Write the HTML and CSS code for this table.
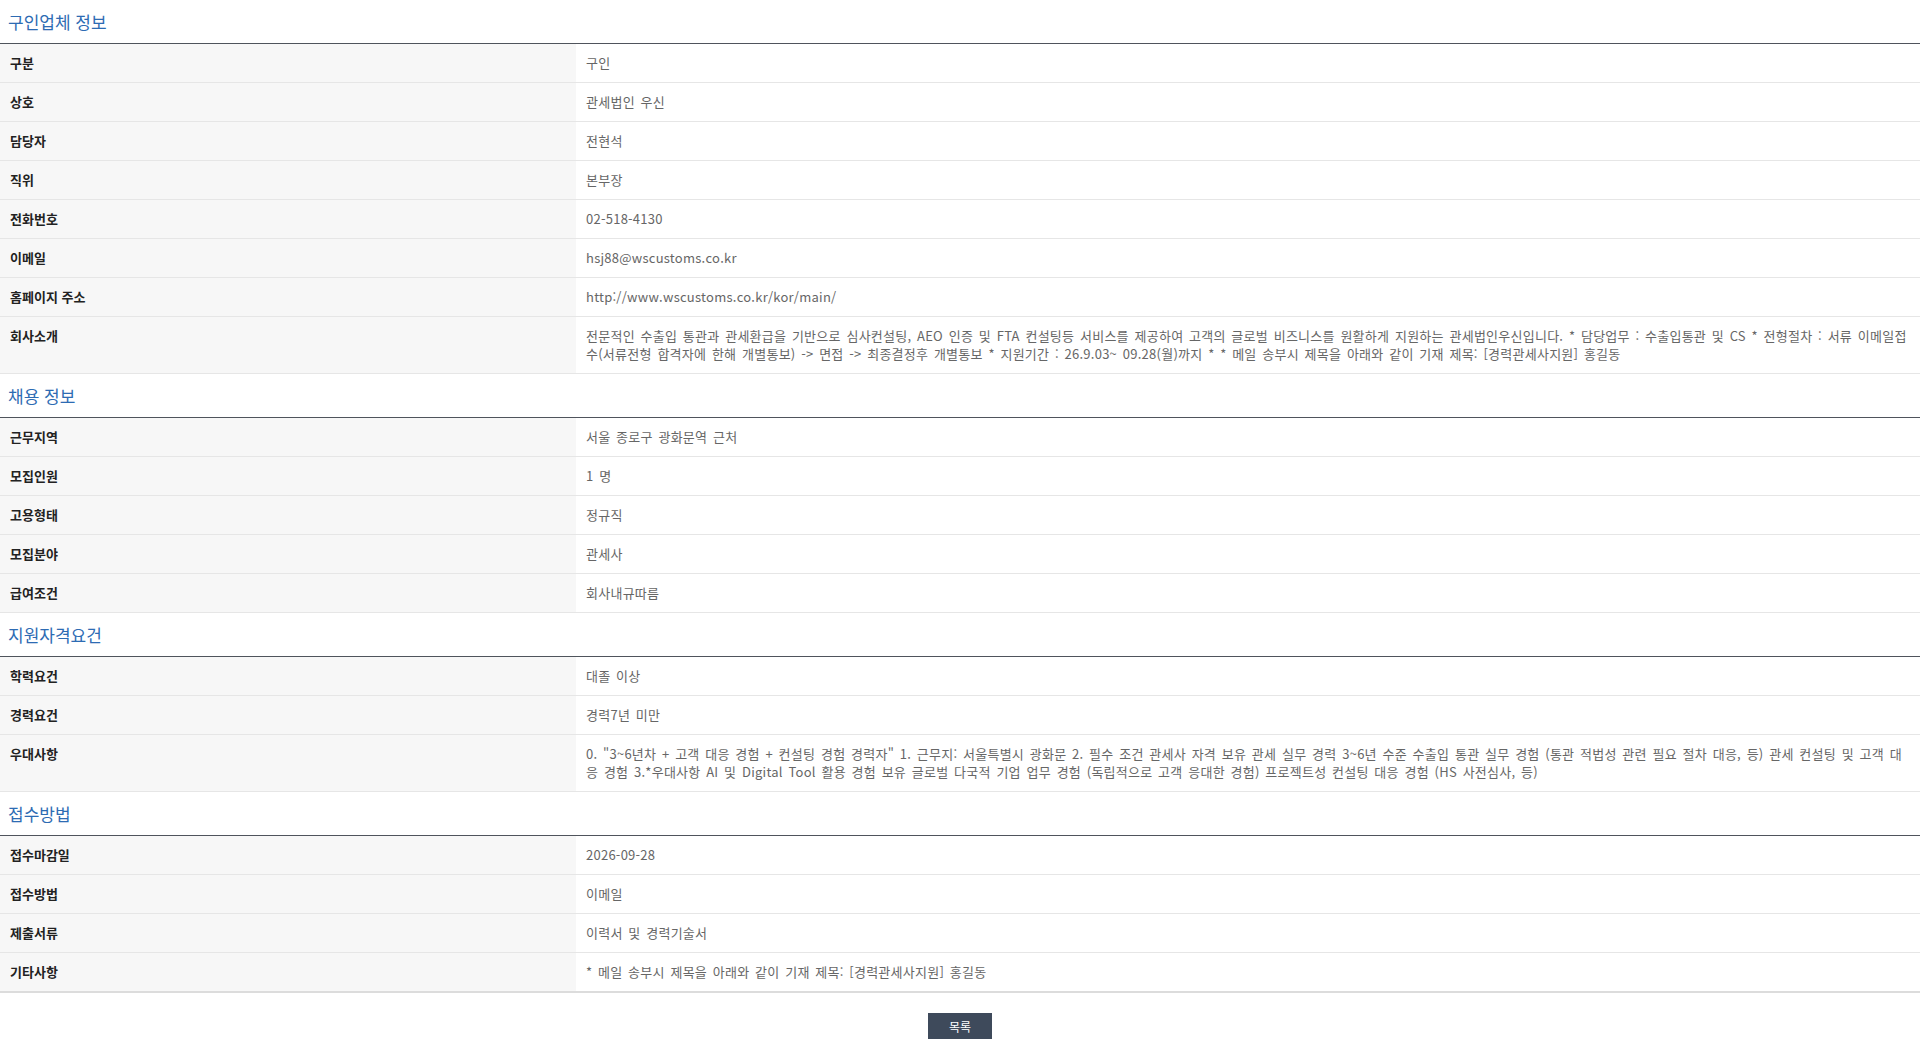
FILE: index.html
```html
<!DOCTYPE html>
<html lang="ko">
<head>
<meta charset="utf-8">
<title>채용 정보</title>
<link rel="stylesheet" href="styles.css">
</head>
<body>
<div class="page">
  <section class="sec">
    <h3 class="sec-title">구인업체 정보</h3>
    <table class="info">
      <tr><th>구분</th><td>구인</td></tr>
      <tr><th>상호</th><td>관세법인 우신</td></tr>
      <tr><th>담당자</th><td>전현석</td></tr>
      <tr><th>직위</th><td>본부장</td></tr>
      <tr><th>전화번호</th><td>02-518-4130</td></tr>
      <tr><th>이메일</th><td>hsj88@wscustoms.co.kr</td></tr>
      <tr><th>홈페이지 주소</th><td>http://www.wscustoms.co.kr/kor/main/</td></tr>
      <tr><th>회사소개</th><td>전문적인 수출입 통관과 관세환급을 기반으로 심사컨설팅, AEO 인증 및 FTA 컨설팅등 서비스를 제공하여 고객의 글로벌 비즈니스를 원활하게 지원하는 관세법인우신입니다. * 담당업무 : 수출입통관 및 CS * 전형절차 : 서류 이메일접수(서류전형 합격자에 한해 개별통보) -&gt; 면접 -&gt; 최종결정후 개별통보 * 지원기간 : 26.9.03~ 09.28(월)까지 * * 메일 송부시 제목을 아래와 같이 기재 제목: [경력관세사지원] 홍길동</td></tr>
    </table>
  </section>
  <section class="sec">
    <h3 class="sec-title">채용 정보</h3>
    <table class="info">
      <tr><th>근무지역</th><td>서울 종로구 광화문역 근처</td></tr>
      <tr><th>모집인원</th><td>1 명</td></tr>
      <tr><th>고용형태</th><td>정규직</td></tr>
      <tr><th>모집분야</th><td>관세사</td></tr>
      <tr><th>급여조건</th><td>회사내규따름</td></tr>
    </table>
  </section>
  <section class="sec">
    <h3 class="sec-title">지원자격요건</h3>
    <table class="info">
      <tr><th>학력요건</th><td>대졸 이상</td></tr>
      <tr><th>경력요건</th><td>경력7년 미만</td></tr>
      <tr><th>우대사항</th><td>0. "3~6년차 + 고객 대응 경험 + 컨설팅 경험 경력자" 1. 근무지: 서울특별시 광화문 2. 필수 조건 관세사 자격 보유 관세 실무 경력 3~6년 수준 수출입 통관 실무 경험 (통관 적법성 관련 필요 절차 대응, 등) 관세 컨설팅 및 고객 대응 경험 3.*우대사항 AI 및 Digital Tool 활용 경험 보유 글로벌 다국적 기업 업무 경험 (독립적으로 고객 응대한 경험) 프로젝트성 컨설팅 대응 경험 (HS 사전심사, 등)</td></tr>
    </table>
  </section>
  <section class="sec">
    <h3 class="sec-title">접수방법</h3>
    <table class="info last">
      <tr><th>접수마감일</th><td>2026-09-28</td></tr>
      <tr><th>접수방법</th><td>이메일</td></tr>
      <tr><th>제출서류</th><td>이력서 및 경력기술서</td></tr>
      <tr><th>기타사항</th><td>* 메일 송부시 제목을 아래와 같이 기재 제목: [경력관세사지원] 홍길동</td></tr>
    </table>
  </section>
  <div class="actions">
    <button class="btn-list" type="button">목록</button>
  </div>
</div>
</body>
</html>
```

FILE: styles.css
```css
html, body {
  margin: 0;
  padding: 0;
  background: #fff;
}
body {
  font-family: "Noto Sans CJK KR", "Noto Sans", sans-serif;
  font-size: 13px;
  color: #666;
}
.page {
  width: 100%;
}
.sec-title {
  margin: 0;
  padding: 0 8px;
  height: 43px;
  line-height: 43px;
  font-size: 17px;
  font-weight: normal;
  color: #2d6bb3;
}
.info {
  width: 100%;
  border-collapse: collapse;
  border-top: 1px solid #4f545c;
  table-layout: fixed;
}
.info th,
.info td {
  padding: 10px 10px 10px;
  line-height: 18px;
  border-bottom: 1px solid #e6e6e6;
  vertical-align: top;
  text-align: left;
}
.info th {
  width: 30%;
  box-sizing: border-box;
  background: #f7f7f7;
  color: #222;
  font-weight: bold;
}
.info td {
  color: #666;
  background: #fff;
  letter-spacing: 0.25px;
  word-spacing: 1.8px;
  word-break: break-all;
}
.info.last tr:last-child th,
.info.last tr:last-child td {
  border-bottom: 2px solid #dcdcdc;
}
.actions {
  display: flex;
  justify-content: center;
  padding-top: 20px;
}
.btn-list {
  width: 64px;
  height: 26px;
  border: 0;
  background: #3e4a5b;
  color: #fff;
  font-family: "Noto Sans CJK KR", sans-serif;
  font-size: 12px;
  padding: 0;
  cursor: pointer;
}
```
